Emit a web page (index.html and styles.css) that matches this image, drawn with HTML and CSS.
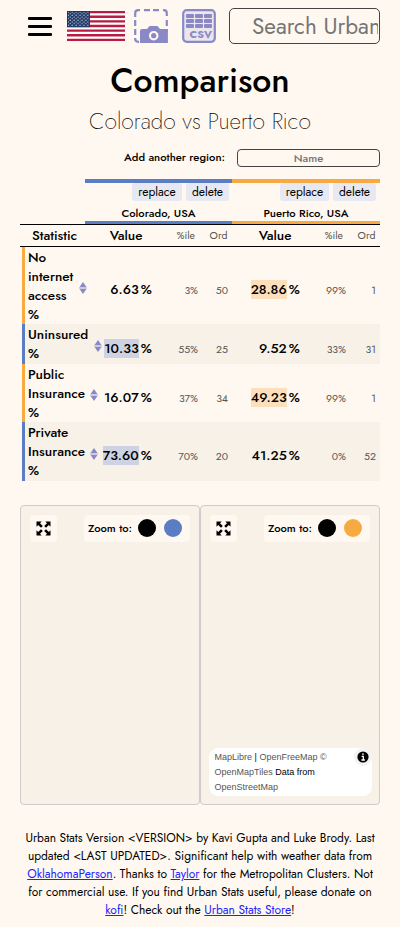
FILE: index.html
```html
<!DOCTYPE html>
<html lang="en">
<head>
<meta charset="utf-8">
<title>Comparison</title>
<link rel="stylesheet" href="styles.css">
</head>
<body>
<svg class="defs" width="0" height="0">
  <defs>
    <pattern id="stars" width="3.9" height="3.3" patternUnits="userSpaceOnUse">
      <circle cx="1.2" cy="1" r=".6" fill="#fff"/><circle cx="3.15" cy="2.65" r=".6" fill="#fff"/>
    </pattern>
    <symbol id="sort" viewBox="0 0 8 12"><path d="M4 0 7.6 5.3H.4zM4 12 .4 6.7h7.2z" fill="#8a89c6"/><path d="M0 5.3h8v1.4H0z" fill="#c9c4dc"/></symbol>
    <symbol id="expand" viewBox="0 0 15 15"><path d="M.5.5h5.200L4 2.200 6.800 5 5 6.800 2.200 4 .5 5.700zM14.500.5v5.200L12.800 4 10 6.800 8.200 5 11 2.200 9.300.5zM.5 14.500V9.300L2.200 11 5 8.200 6.800 10 4 12.800 5.700 14.500zM14.500 14.500H9.300L11 12.800 8.200 10 10 8.200 12.800 11l1.700-1.700z"/></symbol>
  </defs>
</svg>
<header class="top">
  <div class="burger"><i></i><i></i><i></i></div>
  <svg class="flag" viewBox="0 0 58 30" preserveAspectRatio="none">
    <rect width="58" height="30" fill="#fff"/>
    <path d="M0 1.15h58M0 5.77h58M0 10.38h58M0 15h58M0 19.62h58M0 24.23h58M0 28.85h58" stroke="#b81c43" stroke-width="2.31"/>
    <rect width="23" height="16.15" fill="#1a3666"/><rect x="1" y=".8" width="21.2" height="14.5" fill="url(#stars)"/>
  </svg>
  <svg class="shot" viewBox="0 0 34 34">
    <path d="M1.2 8V4.2q0-3 3-3H6M10 1.2h6M19 1.2h6M29 1.2h.8q3 0 3 3V7M32.8 11v6M1.2 11v6M1.2 20v6M1.2 29v.8q0 3 3 3H5M32.8 20v3" fill="none" stroke="#8a89c6" stroke-width="2.2"/>
    <path d="M6 22q0-2 2-2h5l2.500-3h8l2.500 3h5.900q2 0 2 2V34H6z" fill="#8a89c6"/>
    <circle cx="19.7" cy="26.7" r="3.7" fill="#8a89c6" stroke="#fff8f0" stroke-width="2.2"/>
  </svg>
  <svg class="csv" viewBox="0 0 34 34">
    <rect x="1.2" y="1.2" width="31.6" height="31.6" rx="3.5" fill="#ebe5ec" stroke="#8a89c6" stroke-width="2.2"/>
    <g fill="#8a89c6"><rect x="4" y="5" width="8" height="4" rx="1"/><rect x="13" y="5" width="8" height="4" rx="1"/><rect x="22" y="5" width="8" height="4" rx="1"/><rect x="4" y="10" width="8" height="4" rx="1"/><rect x="13" y="10" width="8" height="4" rx="1"/><rect x="22" y="10" width="8" height="4" rx="1"/><rect x="4" y="15" width="8" height="4" rx="1"/><rect x="13" y="15" width="8" height="4" rx="1"/><rect x="22" y="15" width="8" height="4" rx="1"/></g>
    <text x="7.5" y="28.7" textLength="22.500" class="csvtext">CSV</text>
  </svg>
  <div class="search"><span>Search Urban</span></div>
</header>
<main>
  <h1><span>Comparison</span></h1>
  <h2><span>Colorado vs Puerto Rico</span></h2>
  <div class="add"><span>Add another region:</span><div class="name"><b>Name</b></div></div>
  <section class="regions">
    <div class="region blue"><div class="btns"><button>replace</button><button class="del">delete</button></div><p class="co">Colorado, USA</p></div>
    <div class="region orange"><div class="btns"><button>replace</button><button class="del">delete</button></div><p>Puerto Rico, USA</p></div>
  </section>
  <section class="table">
    <div class="row head"><b class="stat">Statistic</b><b class="v">Value</b><span class="p">%ile</span><span class="o">Ord</span><b class="v two">Value</b><span class="p">%ile</span><span class="o">Ord</span></div>
    <div class="row r1 orange"><div class="stat"><span>No<br>internet<br>access<br>%</span><svg><use href="#sort"/></svg></div><b class="v"><span>6.63</span><i>%</i></b><span class="p">3%</span><span class="o">50</span><b class="v two"><span class="hl">28.86</span><i>%</i></b><span class="p">99%</span><span class="o">1</span></div>
    <div class="row r2 blue shade"><div class="stat"><span>Uninsured<br>%</span><svg><use href="#sort"/></svg></div><b class="v"><span class="hl">10.33</span><i>%</i></b><span class="p">55%</span><span class="o">25</span><b class="v two"><span>9.52</span><i>%</i></b><span class="p">33%</span><span class="o">31</span></div>
    <div class="row r3 orange"><div class="stat"><span>Public<br>Insurance<br>%</span><svg><use href="#sort"/></svg></div><b class="v"><span>16.07</span><i>%</i></b><span class="p">37%</span><span class="o">34</span><b class="v two"><span class="hl">49.23</span><i>%</i></b><span class="p">99%</span><span class="o">1</span></div>
    <div class="row r4 blue shade"><div class="stat"><span>Private<br>Insurance<br>%</span><svg><use href="#sort"/></svg></div><b class="v"><span class="hl">73.60</span><i>%</i></b><span class="p">70%</span><span class="o">20</span><b class="v two"><span>41.25</span><i>%</i></b><span class="p">0%</span><span class="o">52</span></div>
  </section>
  <section class="maps">
    <div class="map blue"><div class="tools"><div class="full"><svg><use href="#expand"/></svg></div><div class="zoom"><b>Zoom to:</b><i></i><i class="c"></i></div></div></div>
    <div class="map orange"><div class="tools"><div class="full"><svg><use href="#expand"/></svg></div><div class="zoom"><b>Zoom to:</b><i></i><i class="c"></i></div></div>
      <div class="attr"><div><a>MapLibre</a> | <a>OpenFreeMap</a> <a>©<br>OpenMapTiles</a> Data from<br><a>OpenStreetMap</a></div>
      <svg viewBox="0 0 18 18"><circle cx="9" cy="9" r="9" fill="#f2f2f2"/><circle cx="9" cy="9" r="5.6"/><path d="M9 5.2v1.7M7.6 8.3H9.3v3.6M7.4 12h3.5" stroke="#fff" stroke-width="1.3" fill="none"/></svg></div>
    </div>
  </section>
</main>
<footer>
  <p>Urban Stats Version &lt;VERSION&gt; by Kavi Gupta and Luke Brody. Last</p>
  <p>updated &lt;LAST UPDATED&gt;. Significant help with weather data from</p>
  <p><a>OklahomaPerson</a>. Thanks to <a>Taylor</a> for the Metropolitan Clusters. Not</p>
  <p>for commercial use. If you find Urban Stats useful, please donate on</p>
  <p><a>kofi</a>! Check out the <a>Urban Stats Store</a>!</p>
</footer>
</body>
</html>
```
FILE: styles.css
```css
* { box-sizing: border-box; }
body { margin: 0; width: 400px; height: 927px; overflow: hidden; background: #fff8f0; color: #000; font-family: Jost, Lato, sans-serif; }
h1, h2, p { margin: 0; }
b { font-weight: 500; }
i { font-style: normal; }
.defs { position: absolute; }
.blue { --c: #5a7dc3; --h: #ced3e4; }
.orange { --c: #f7aa41; --h: #fde0bb; }

.top { display: flex; height: 52px; padding: 8px 20px 0 28px; }
.burger { width: 24px; height: 19px; margin: 9px 15px 0 0; display: flex; flex-direction: column; justify-content: space-between; }
.burger i { height: 3px; background: #000; border-radius: 1px; }
.flag { width: 58px; height: 30px; margin: 3px 9px 0 0; }
.shot, .csv { width: 34px; height: 34px; margin-top: 1px; }
.shot { margin-right: 14px; }
.csv { margin-right: 13px; }
.csvtext { font: 700 10.8px Jost, Lato, sans-serif; fill: #8a89c6; }
.search { width: 151px; height: 36px; border: 1px solid #444; border-radius: 5px; white-space: nowrap; font-size: 22.5px; line-height: 34px; color: #757575; padding: 0 1px 0 22px; }
.search span { display: block; overflow: hidden; }

h1 { height: 56px; line-height: 58px; font-size: 33.75px; font-weight: 500; text-align: center; }
h2 { height: 27px; line-height: 27px; font-size: 22.5px; font-weight: 200; text-align: center; }
.add { display: flex; height: 18px; margin: 14px 20px 12px; justify-content: flex-end; align-items: center; font-size: 11.25px; font-weight: 500; }
.add > span { margin-right: 12px; line-height: 16px; position: relative; top: -1px; }
.name { width: 143px; height: 18px; border: 1px solid #444; border-radius: 4px; text-align: center; line-height: 17px; color: #757575; font-size: 11.25px; }

.regions { display: flex; margin: 0 20px 0 85px; }
.region { height: 45px; width: 147px; border-top: 4px solid var(--c); border-bottom: 3px solid var(--c); }
.region.orange { width: 148px; }
.btns { display: flex; justify-content: flex-end; gap: 4px; padding-right: 3px; height: 18px; }
.orange .btns { padding-right: 4px; }
button { width: 50px; height: 18px; padding: 0; border: 0; border-radius: 3px; background: #e6e9f2; font: 12px/17px Jost, Lato, sans-serif; }
.orange button:first-child { width: 49px; }
.del { width: 43px; }
.region p { text-align: center; font-size: 11.25px; line-height: 14px; margin-top: 5px; font-weight: 500; }

.table { margin: 0 20px; }
.row { display: grid; grid-template-columns: 77px 50px 46px 30px 72px 46px 30px; align-items: center; margin-left: 2px; border-left: 3px solid var(--c); }
.shade { background: #f7f1e8; }
.head { margin-left: 0; height: 23px; border: 0; border-top: 1px solid #000; border-bottom: 1px solid #000; padding-left: 5px; font-size: 13.5px; }
.row .v { display: flex; justify-content: flex-end; align-items: center; font-size: 13.5px; position: relative; top: 4px; left: .5px; }
.row .v span { height: 19px; line-height: 19px; }
.row .v i { line-height: 19px; width: 13.8px; padding-left: 2px; }
.blue .hl, .orange .hl { background: var(--h); }
.row .p, .row .o { text-align: right; font-size: 10.5px; color: #555; position: relative; top: 5px; }
.row.head .v { top: 0; padding-right: 10px; }
.row.head .two { padding-right: 9px; }
.row.head .p, .row.head .o { top: 0; }
.row.head .p { padding-right: 3px; }
.row.head .o { padding-right: .5px; }
.head .stat { padding-left: 7px; }
div.stat { display: flex; align-items: center; padding-left: 3px; font-size: 13.5px; line-height: 19px; font-weight: 500; white-space: nowrap; }
.stat svg { width: 8px; height: 12px; position: relative; top: 2px; flex: none; }
.stat > span { flex: none; }
.r1 { height: 77px; } .r1 .stat > span { width: 51px; }
.r2 { height: 40px; } .r2 .stat > span { width: 66px; }
.r3 { height: 58px; } .r3 .stat > span { width: 62px; }
.r4 { height: 59px; } .r4 .stat > span { width: 62px; }

.maps { display: flex; margin: 24px 20px 24px; }
.map { width: 180px; height: 300px; border: 1px solid #ccc; border-radius: 4px; background: #f7f1e8; padding: 9px 9px 8px; display: flex; flex-direction: column; justify-content: space-between; }
.tools { display: flex; justify-content: space-between; }
.full, .zoom { height: 27px; background: #fff8f0; border-radius: 4px; display: flex; align-items: center; }
.full { width: 27px; justify-content: center; }
.full svg { width: 15px; height: 15px; margin-top: -1px; }
.zoom { width: 106px; padding: 0 0 1px 4px; font-size: 11.25px; }
.zoom b { width: 50px; white-space: nowrap; }
.zoom i { width: 18px; height: 18px; border-radius: 50%; background: #000; }
.zoom .c { background: var(--c); margin-left: 8px; }
.attr { display: flex; width: 163px; height: 48px; margin: 0 -2px 0 -1px; padding: 2px 0 0 5.5px; background: #fff; border-radius: 9px; font: 9px/15px "Liberation Sans", sans-serif; }
.attr div { flex: 1; white-space: nowrap; }
.attr a { color: #555; }
.attr svg { width: 18px; height: 18px; margin-top: -2px; }

footer { text-align: center; font-size: 12px; }
footer p { height: 18px; line-height: 18px; white-space: nowrap; }
footer a { color: #22f; text-decoration: underline; }
```
